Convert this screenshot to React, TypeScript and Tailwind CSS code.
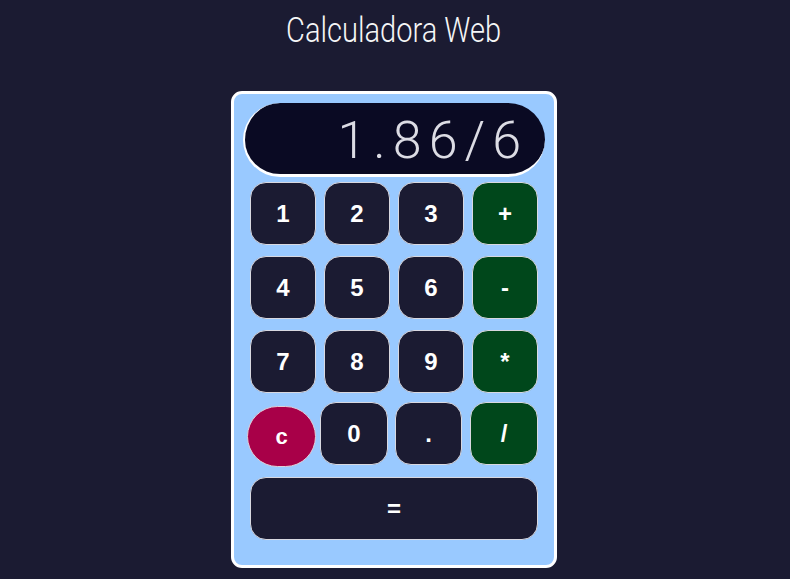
import { useState } from 'react'

const rows = [
  ['1', '2', '3', '+'],
  ['4', '5', '6', '-'],
  ['7', '8', '9', '*'],
]

const ops = ['+', '-', '*', '/']

export default function App() {
  const [display, setDisplay] = useState('1.86/6')

  const press = (key: string) => {
    if (key === 'c') {
      setDisplay('')
      return
    }
    if (key === '=') {
      try {
        // eslint-disable-next-line no-new-func
        const result = Function(`return (${display})`)()
        setDisplay(String(result))
      } catch {
        setDisplay('Error')
      }
      return
    }
    setDisplay(display + key)
  }

  const btnClass = (key: string) =>
    ops.includes(key)
      ? 'bg-[#00471b] text-white'
      : 'bg-[#1b1b32] text-white'

  return (
    <div className="min-h-screen bg-[#1b1b32] flex flex-col items-center font-['Liberation_Sans',Arial,sans-serif]">
      <h1 className="mt-[8px] mr-[2px] h-[45px] text-[35px] leading-[45px] font-light text-[#f5f6f7] scale-x-[0.83] font-['Roboto',sans-serif]">
        Calculadora Web
      </h1>

      <div className="mt-[38px] mr-[2px] w-[326px] bg-[#99c9ff] border-[3px] border-white rounded-[11px] pt-[9px] pb-[25px]">
        <div className="mx-[9px] h-[74px] rounded-full bg-[#0a0a23] border-l-[2px] border-b-[3px] border-white flex items-center justify-end pr-[17px] pt-[4px] overflow-hidden">
          <span className="text-[52px] font-light text-[#dcdce4] tracking-[7px] font-['Roboto',sans-serif] leading-none">
            {display}
          </span>
        </div>

        <div className="px-[16px] mt-[5px] flex flex-col gap-[11px]">
          {rows.map((row, i) => (
            <div key={i} className="flex gap-[8px]">
              {row.map((key) => (
                <button
                  key={key}
                  onClick={() => press(key)}
                  className={`w-[66px] h-[63px] rounded-[16px] border border-[#d8d8e0] text-[24px] font-bold flex items-center justify-center ${btnClass(key)}`}
                >
                  {key}
                </button>
              ))}
            </div>
          ))}

          <div className="flex items-start -ml-[3px] -mt-[2px]">
            <button
              onClick={() => press('c')}
              className="w-[69px] h-[61px] mt-[4px] rounded-full border border-[#e0d0d8] bg-[#a80048] text-white text-[22px] font-bold flex items-center justify-center"
            >
              c
            </button>
            <button
              onClick={() => press('0')}
              className="ml-[4px] w-[68px] h-[63px] rounded-[16px] border border-[#d8d8e0] bg-[#1b1b32] text-white text-[24px] font-bold flex items-center justify-center"
            >
              0
            </button>
            <button
              onClick={() => press('.')}
              className="ml-[7px] w-[67px] h-[63px] rounded-[16px] border border-[#d8d8e0] bg-[#1b1b32] text-white text-[24px] font-bold flex items-center justify-center"
            >
              .
            </button>
            <button
              onClick={() => press('/')}
              className="ml-[8px] w-[68px] h-[63px] rounded-[16px] border border-[#d8d8e0] bg-[#00471b] text-white text-[24px] font-bold flex items-center justify-center"
            >
              /
            </button>
          </div>

          <button
            onClick={() => press('=')}
            className="-mt-[1px] w-[288px] h-[63px] rounded-[16px] border border-[#d8d8e0] bg-[#1b1b32] text-white text-[24px] font-bold flex items-center justify-center"
          >
            =
          </button>
        </div>
      </div>
    </div>
  )
}
